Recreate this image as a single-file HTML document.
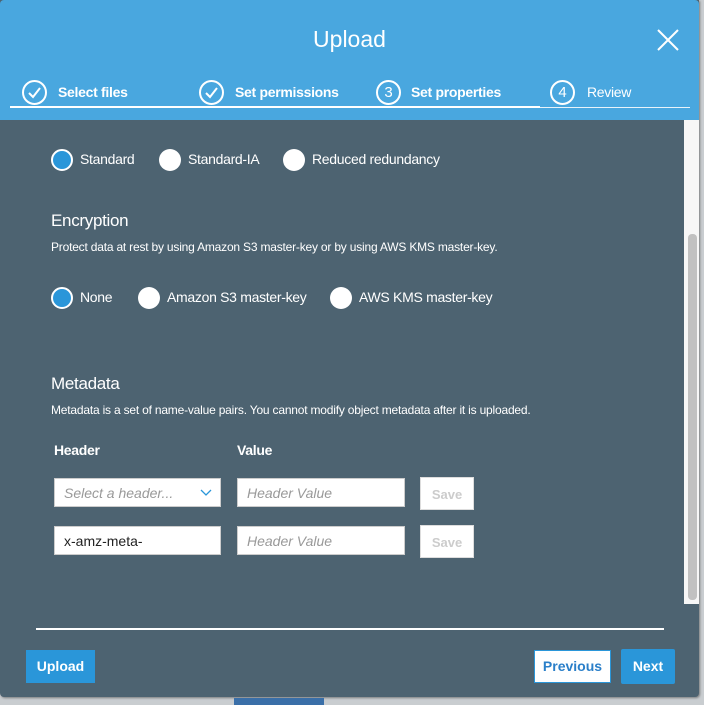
<!DOCTYPE html><html><head><style>
body{margin:0;width:704px;height:705px;background:#c9cdd0;font-family:"Liberation Sans",sans-serif;position:relative;overflow:hidden}
.a{position:absolute}
.m{left:0;top:0;width:699px;height:697px;background:#4d6371;border-radius:0 0 4px 4px;box-shadow:1px 1px 2px rgba(0,0,0,.4)}
.hd{left:0;top:0;width:699px;height:120px;background:#49a7df;border-radius:4px 4px 0 0}
.w{color:#fff}
.r{width:22px;height:22px;border-radius:50%;background:#fff}
.rs{width:18px;height:18px;border-radius:50%;background:#2a96d9;border:2px solid #fff}
.l{font-size:14px;color:#fff;letter-spacing:-.3px}
.c{width:21px;height:21px;border:2px solid #fff;border-radius:50%;color:#fff;font-size:15px;text-align:center;line-height:21px}
.st{font-size:14px;font-weight:bold;color:#fff;letter-spacing:-.3px}
.in{background:#fff;border:1px solid #ccc;height:29px;font-size:14px;color:#999;font-style:italic;line-height:29px;padding-left:9px;box-sizing:border-box}
.sv{background:#fff;border:1px solid #ddd;width:54px;height:33px;color:#ccc;font-size:13px;font-weight:bold;text-align:center;line-height:33px;box-sizing:border-box}
</style></head><body>
<div class="a m"></div>
<div class="a hd"></div>
<div class="a w" style="left:0;width:699px;top:26px;text-align:center;font-size:23px">Upload</div>
<svg class="a" style="left:657px;top:29px" width="22" height="22"><path d="M1 1L21 21M21 1L1 21" stroke="#fff" stroke-width="2"/></svg>
<div class="a" style="left:10px;top:106px;width:530px;height:2px;background:#fff"></div>
<div class="a" style="left:540px;top:107px;width:150px;height:1px;background:#e8f3fa"></div>
<div class="a c" style="left:22px;top:80px"><svg width="21" height="21"><path d="M5 11L9 15L16 6" stroke="#fff" stroke-width="2" fill="none"/></svg></div>
<div class="a st" style="left:58px;top:84px">Select files</div>
<div class="a c" style="left:199px;top:80px"><svg width="21" height="21"><path d="M5 11L9 15L16 6" stroke="#fff" stroke-width="2" fill="none"/></svg></div>
<div class="a st" style="left:235px;top:84px">Set permissions</div>
<div class="a c" style="left:376px;top:80px">3</div>
<div class="a st" style="left:411px;top:84px">Set properties</div>
<div class="a c" style="left:550px;top:80px">4</div>
<div class="a st" style="left:587px;top:84px;font-weight:normal">Review</div>
<div class="a" style="left:684px;top:120px;width:15px;height:484px;background:#f7f7f7"></div>
<div class="a" style="left:688px;top:234px;width:9px;height:366px;background:#c1c1c1;border-radius:4px"></div>
<div class="a rs" style="left:51px;top:149px"></div><div class="a l" style="left:80px;top:151px">Standard</div>
<div class="a r" style="left:159px;top:149px"></div><div class="a l" style="left:188px;top:151px">Standard-IA</div>
<div class="a r" style="left:283px;top:149px"></div><div class="a l" style="left:312px;top:151px">Reduced redundancy</div>
<div class="a w" style="left:51px;top:211px;font-size:17px;letter-spacing:-.3px">Encryption</div>
<div class="a w" style="left:51px;top:240px;font-size:12px;letter-spacing:-.2px">Protect data at rest by using Amazon S3 master-key or by using AWS KMS master-key.</div>
<div class="a rs" style="left:51px;top:287px"></div><div class="a l" style="left:80px;top:289px">None</div>
<div class="a r" style="left:138px;top:287px"></div><div class="a l" style="left:167px;top:289px">Amazon S3 master-key</div>
<div class="a r" style="left:330px;top:287px"></div><div class="a l" style="left:359px;top:289px">AWS KMS master-key</div>
<div class="a w" style="left:51px;top:374px;font-size:17px;letter-spacing:-.3px">Metadata</div>
<div class="a w" style="left:51px;top:403px;font-size:12px;letter-spacing:-.2px">Metadata is a set of name-value pairs. You cannot modify object metadata after it is uploaded.</div>
<div class="a w" style="left:54px;top:442px;font-size:14px;font-weight:bold;letter-spacing:-.3px">Header</div>
<div class="a w" style="left:237px;top:442px;font-size:14px;font-weight:bold;letter-spacing:-.3px">Value</div>
<div class="a in" style="left:54px;top:478px;width:167px">Select a header...</div>
<svg class="a" style="left:200px;top:489px" width="12" height="8"><path d="M1 1L6 6L11 1" stroke="#2a96d9" stroke-width="1.3" fill="none"/></svg>
<div class="a in" style="left:237px;top:478px;width:168px">Header Value</div>
<div class="a sv" style="left:420px;top:477px">Save</div>
<div class="a in" style="left:54px;top:526px;width:167px;color:#222;font-style:normal">x-amz-meta-</div>
<div class="a in" style="left:237px;top:526px;width:168px">Header Value</div>
<div class="a sv" style="left:420px;top:525px">Save</div>
<div class="a" style="left:36px;top:628px;width:628px;height:2px;background:#fff"></div>
<div class="a" style="left:26px;top:650px;width:69px;height:33px;background:#2a96d9;color:#fff;font-weight:bold;font-size:14px;text-align:center;line-height:33px">Upload</div>
<div class="a" style="left:534px;top:650px;width:77px;height:33px;background:#fff;border:1px solid #2a96d9;box-sizing:border-box;color:#2a7fc9;font-weight:bold;font-size:14px;text-align:center;line-height:31px">Previous</div>
<div class="a" style="left:621px;top:649px;width:54px;height:35px;background:#2a96d9;color:#fff;font-weight:bold;font-size:14px;text-align:center;line-height:35px;border-radius:2px">Next</div>
<div class="a" style="left:234px;top:698px;width:90px;height:7px;background:#3a6fa8"></div>
</body></html>
